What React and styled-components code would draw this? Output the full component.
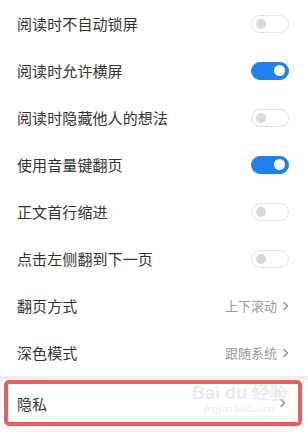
import React from "react";
import styled, { createGlobalStyle } from "styled-components";

const Global = createGlobalStyle`
  html, body { margin: 0; padding: 0; background: #ffffff; }
  body { font-family: "Noto Sans CJK SC", "Noto Sans", sans-serif; }
  * { box-sizing: border-box; }
`;

const Page = styled.div`
  width: 308px;
  height: 432px;
  background: #ffffff;
  display: flex;
  flex-direction: column;
  overflow: hidden;
  position: relative;
`;

const Row = styled.div`
  height: 47px;
  display: flex;
  align-items: center;
  justify-content: space-between;
  padding: 0 18px 0 17px;
  flex-shrink: 0;
`;

const Label = styled.span`
  font-size: 15px;
  color: #333333;
  letter-spacing: 0.1px;
  line-height: 1;
`;

const Toggle = styled.div`
  width: 38px;
  height: 18px;
  border-radius: 9px;
  display: flex;
  align-items: center;
  justify-content: ${(p) => (p.$on ? "flex-end" : "flex-start")};
  padding: 0 3px 0 4px;
  background: ${(p) => (p.$on ? "#1f80ee" : "#ffffff")};
  border: 1px solid ${(p) => (p.$on ? "#1f80ee" : "#e2e2e2")};
  margin-right: 1px;
`;

const Knob = styled.div`
  width: ${(p) => (p.$on ? 11 : 10)}px;
  height: ${(p) => (p.$on ? 11 : 10)}px;
  border-radius: 50%;
  background: ${(p) => (p.$on ? "#ffffff" : "#d9d9d9")};
`;

const Value = styled.span`
  display: flex;
  align-items: center;
  gap: 6px;
  font-size: 13px;
  color: #999999;
  margin-right: 1px;
`;

const Chevron = () => (
  <svg width="6" height="10" viewBox="0 0 6 10">
    <path d="M1 1.5 L4.5 5 L1 8.5" fill="none" stroke="#8a8a8a" strokeWidth="1.3" strokeLinecap="round" strokeLinejoin="round" />
  </svg>
);

const Separator = styled.div`
  height: 4px;
  background: #efefef;
  flex-shrink: 0;
`;

const Highlight = styled.div`
  margin: 0 6px 0 4px;
  height: 46px;
  border: 4px solid #f25c5c;
  border-radius: 5px;
  display: flex;
  align-items: center;
  justify-content: space-between;
  padding: 0 12px 0 9px;
  position: relative;
`;

const Watermark = styled.div`
  position: absolute;
  left: 184px;
  top: -2px;
  display: flex;
  flex-direction: column;
  align-items: center;
  pointer-events: none;
  color: rgba(215, 215, 215, 0.5);
  font-family: "Liberation Sans", Arial, sans-serif;
`;

const MarkTop = styled.span`
  font-size: 18px;
  font-weight: bold;
  line-height: 22px;
`;

const MarkBottom = styled.span`
  font-size: 9px;
  line-height: 10px;
`;

const toggles = [
  ["阅读时不自动锁屏", false],
  ["阅读时允许横屏", true],
  ["阅读时隐藏他人的想法", false],
  ["使用音量键翻页", true],
  ["正文首行缩进", false],
  ["点击左侧翻到下一页", false],
];

export default function App() {
  return (
    <Page>
      <Global />
      {toggles.map(([label, on]) => (
        <Row key={label}>
          <Label>{label}</Label>
          <Toggle $on={on}>
            <Knob $on={on} />
          </Toggle>
        </Row>
      ))}
      <Row>
        <Label>翻页方式</Label>
        <Value>
          上下滚动
          <Chevron />
        </Value>
      </Row>
      <Row>
        <Label>深色模式</Label>
        <Value>
          跟随系统
          <Chevron />
        </Value>
      </Row>
      <Separator />
      <Highlight>
        <Label>隐私</Label>
        <Chevron />
        <Watermark>
          <MarkTop>Bai du 经验</MarkTop>
          <MarkBottom>jingyan.baidu.com</MarkBottom>
        </Watermark>
      </Highlight>
    </Page>
  );
}
